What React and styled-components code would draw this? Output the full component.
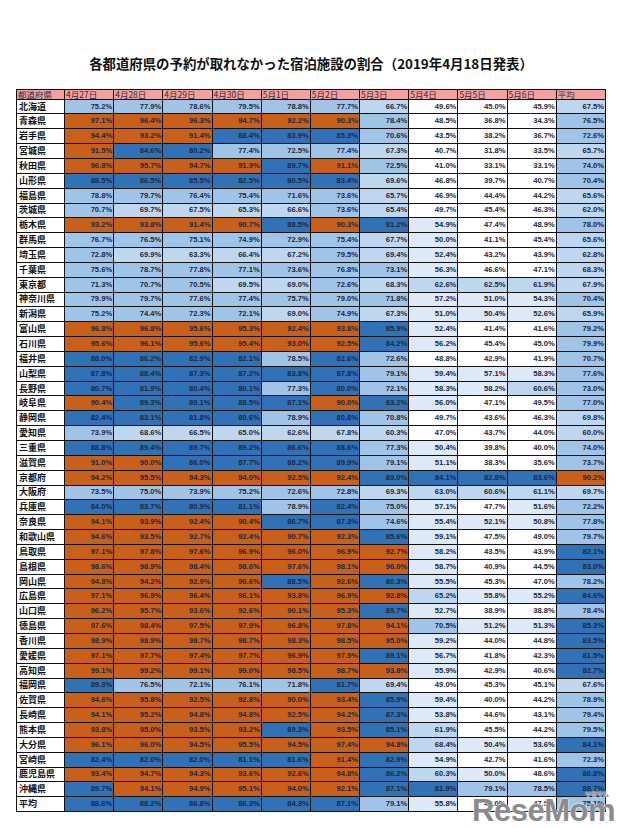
import React from "react";
import styled, { createGlobalStyle } from "styled-components";

const GlobalStyle = createGlobalStyle`
  body {
    margin: 0;
    background: #fff;
    font-family: "Noto Sans CJK JP", "Liberation Sans", sans-serif;
  }
`;

const Page = styled.div`
  width: 620px;
  height: 828px;
  padding: 54px 14px 0 16px;
  box-sizing: border-box;
  overflow: hidden;
`;

const Title = styled.h1`
  margin: 0 0 17px 0;
  font-size: 13.4px;
  line-height: 18px;
  font-weight: 700;
  text-align: center;
  color: #111;
  letter-spacing: 0;
`;

const TableWrap = styled.div`
  position: relative;
  width: 590px;
`;

const Table = styled.table`
  width: 590px;
  border-collapse: collapse;
  table-layout: fixed;
`;

const HeadRow = styled.tr`
  height: 9.6px;
`;

const Row = styled.tr`
  height: 14.85px;
`;

const HeadCell = styled.th`
  border: 1px solid #111;
  background: #f2a0a0;
  color: #3a2a3a;
  font-size: 8.5px;
  font-weight: 400;
  line-height: 8px;
  padding: 0 1px;
  text-align: left;
  white-space: nowrap;
  overflow: hidden;
`;

const NameCell = styled.td`
  border: 1px solid #111;
  background: #fff;
  color: #111;
  font-size: 9px;
  font-weight: 700;
  line-height: 10px;
  padding: 0 2px;
  text-align: left;
  white-space: nowrap;
  overflow: hidden;
`;

const ValueCell = styled.td`
  border: 1px solid #111;
  background: ${(props) => props.$bg};
  color: #1f2740;
  font-family: "Liberation Sans", Arial, sans-serif;
  font-size: 7.6px;
  font-weight: 700;
  line-height: 10px;
  padding: 0 1px 0 0;
  text-align: right;
  white-space: nowrap;
  overflow: hidden;
`;

const Watermark = styled.div`
  position: absolute;
  right: -9px;
  bottom: -14px;
  font-family: "Liberation Sans Narrow", "Liberation Sans", sans-serif;
  font-weight: 700;
  font-size: 31px;
  line-height: 30px;
  color: #8b8b8b;
  text-shadow: 0 0 2px #fff, 0 0 1px #fff;
  letter-spacing: -0.5px;
`;

const WatermarkKana = styled.span`
  position: absolute;
  right: 6px;
  top: -5px;
  font-family: "Noto Sans CJK JP", sans-serif;
  font-size: 6px;
  line-height: 6px;
  font-weight: 700;
  letter-spacing: 0;
  color: #8b8b8b;
`;

const headers = [
  "都道府県",
  "4月27日",
  "4月28日",
  "4月29日",
  "4月30日",
  "5月1日",
  "5月2日",
  "5月3日",
  "5月4日",
  "5月5日",
  "5月6日",
  "平均",
];

const rows = [
  ["北海道", [75.2, 77.9, 78.6, 79.5, 78.8, 77.7, 66.7, 49.6, 45.0, 45.9, 67.5]],
  ["青森県", [97.1, 96.4, 96.3, 94.7, 92.2, 90.3, 78.4, 48.5, 36.8, 34.3, 76.5]],
  ["岩手県", [94.4, 93.2, 91.4, 88.4, 83.9, 85.3, 70.6, 43.5, 38.2, 36.7, 72.6]],
  ["宮城県", [91.5, 84.6, 80.2, 77.4, 72.5, 77.4, 67.3, 40.7, 31.8, 33.5, 65.7]],
  ["秋田県", [96.8, 95.7, 94.7, 91.9, 89.7, 91.1, 72.5, 41.0, 33.1, 33.1, 74.0]],
  ["山形県", [88.5, 86.5, 85.5, 82.5, 80.5, 83.4, 69.6, 46.8, 39.7, 40.7, 70.4]],
  ["福島県", [78.8, 79.7, 76.4, 75.4, 71.6, 73.6, 65.7, 46.9, 44.4, 44.2, 65.6]],
  ["茨城県", [70.7, 69.7, 67.5, 65.3, 66.6, 73.6, 65.4, 49.7, 45.4, 46.3, 62.0]],
  ["栃木県", [93.2, 93.8, 91.4, 90.7, 88.5, 90.3, 81.2, 54.9, 47.4, 48.9, 78.0]],
  ["群馬県", [76.7, 76.5, 75.1, 74.9, 72.9, 75.4, 67.7, 50.0, 41.1, 45.4, 65.6]],
  ["埼玉県", [72.8, 69.9, 63.3, 66.4, 67.2, 79.5, 69.4, 52.4, 43.2, 43.9, 62.8]],
  ["千葉県", [75.6, 78.7, 77.8, 77.1, 73.6, 76.8, 73.1, 56.3, 46.6, 47.1, 68.3]],
  ["東京都", [71.3, 70.7, 70.5, 69.5, 69.0, 72.6, 68.3, 62.6, 62.5, 61.9, 67.9]],
  ["神奈川県", [79.9, 79.7, 77.6, 77.4, 75.7, 79.0, 71.8, 57.2, 51.0, 54.3, 70.4]],
  ["新潟県", [75.2, 74.4, 72.3, 72.1, 69.0, 74.9, 67.3, 51.0, 50.4, 52.6, 65.9]],
  ["富山県", [96.8, 96.8, 95.6, 95.3, 92.4, 93.8, 85.9, 52.4, 41.4, 41.6, 79.2]],
  ["石川県", [95.6, 96.1, 95.6, 95.4, 93.0, 92.5, 84.2, 56.2, 45.4, 45.0, 79.9]],
  ["福井県", [88.0, 86.2, 82.9, 82.1, 78.5, 82.6, 72.6, 48.8, 42.9, 41.9, 70.7]],
  ["山梨県", [87.8, 88.4, 87.3, 87.2, 83.8, 87.8, 79.1, 59.4, 57.1, 58.3, 77.6]],
  ["長野県", [80.7, 81.9, 80.4, 80.1, 77.3, 80.0, 72.1, 58.3, 58.2, 60.6, 73.0]],
  ["岐阜県", [90.4, 89.3, 89.1, 88.5, 87.1, 90.0, 83.2, 56.0, 47.1, 49.5, 77.0]],
  ["静岡県", [82.4, 83.1, 81.8, 80.6, 78.9, 80.8, 70.8, 49.7, 43.6, 46.3, 69.8]],
  ["愛知県", [73.9, 68.6, 66.5, 65.0, 62.6, 67.8, 60.3, 47.0, 43.7, 44.0, 60.0]],
  ["三重県", [88.8, 89.4, 89.7, 89.2, 86.6, 88.6, 77.3, 50.4, 39.8, 40.0, 74.0]],
  ["滋賀県", [91.0, 90.0, 86.0, 87.7, 88.2, 89.9, 79.1, 51.1, 38.3, 35.6, 73.7]],
  ["京都府", [94.2, 95.5, 94.3, 94.0, 92.5, 92.4, 89.0, 84.1, 82.8, 83.6, 90.2]],
  ["大阪府", [73.5, 75.0, 73.9, 75.2, 72.6, 72.8, 69.3, 63.0, 60.6, 61.1, 69.7]],
  ["兵庫県", [84.0, 83.7, 80.9, 81.1, 78.9, 82.4, 75.0, 57.1, 47.7, 51.6, 72.2]],
  ["奈良県", [94.1, 93.9, 92.4, 90.4, 86.7, 87.3, 74.6, 55.4, 52.1, 50.8, 77.8]],
  ["和歌山県", [94.6, 93.5, 92.7, 92.4, 90.7, 92.3, 85.6, 59.1, 47.5, 49.0, 79.7]],
  ["鳥取県", [97.1, 97.8, 97.6, 96.9, 96.0, 96.9, 92.7, 58.2, 43.5, 43.9, 82.1]],
  ["島根県", [98.6, 98.9, 98.4, 98.6, 97.6, 98.1, 96.0, 58.7, 40.9, 44.5, 83.0]],
  ["岡山県", [94.8, 94.2, 92.9, 90.6, 88.5, 92.6, 80.3, 55.5, 45.3, 47.0, 78.2]],
  ["広島県", [97.1, 96.9, 96.4, 96.1, 93.8, 96.9, 92.8, 65.2, 55.8, 55.2, 84.6]],
  ["山口県", [96.2, 95.7, 93.6, 92.6, 90.1, 95.3, 89.7, 52.7, 38.9, 38.8, 78.4]],
  ["徳島県", [97.6, 98.4, 97.5, 97.9, 96.8, 97.8, 94.1, 70.5, 51.2, 51.3, 85.3]],
  ["香川県", [98.9, 98.9, 98.7, 98.7, 98.3, 98.5, 95.0, 59.2, 44.0, 44.8, 83.5]],
  ["愛媛県", [97.1, 97.7, 97.4, 97.7, 96.9, 97.9, 89.1, 56.7, 41.8, 42.3, 81.5]],
  ["高知県", [99.1, 99.2, 99.1, 99.0, 98.5, 98.7, 93.8, 55.9, 42.9, 40.6, 82.7]],
  ["福岡県", [89.3, 76.5, 72.1, 76.1, 71.8, 81.7, 69.4, 49.0, 45.3, 45.1, 67.6]],
  ["佐賀県", [94.6, 95.8, 92.5, 92.8, 90.0, 93.4, 85.9, 59.4, 40.0, 44.2, 78.9]],
  ["長崎県", [94.1, 95.2, 94.8, 94.8, 92.5, 94.2, 87.3, 53.8, 44.6, 43.1, 79.4]],
  ["熊本県", [93.8, 95.0, 93.5, 93.2, 89.3, 93.5, 85.1, 61.9, 45.5, 44.2, 79.5]],
  ["大分県", [96.1, 96.0, 94.5, 95.5, 94.5, 97.4, 94.8, 68.4, 50.4, 53.6, 84.1]],
  ["宮崎県", [82.4, 82.0, 82.0, 81.1, 81.6, 91.4, 82.9, 54.9, 42.7, 41.6, 72.3]],
  ["鹿児島県", [93.4, 94.7, 94.3, 93.6, 92.6, 94.8, 86.2, 60.3, 50.0, 48.6, 80.8]],
  ["沖縄県", [89.7, 94.1, 94.9, 95.1, 94.0, 92.1, 87.1, 81.9, 79.1, 78.5, 88.7]],
  ["平均", [88.6, 88.2, 86.8, 86.3, 84.3, 87.1, 79.1, 55.8, 47.0, 47.5, 75.1]],
];

const cellColor = (v) => {
  if (v >= 90) return "#c8601b";
  if (v >= 80) return "#3172b6";
  if (v >= 70) return "#9fc4e8";
  if (v >= 60) return "#bed7ef";
  if (v >= 50) return "#dde9f6";
  return "#ffffff";
};

const App = () => {
  return (
    <Page>
      <GlobalStyle />
      <Title>各都道府県の予約が取れなかった宿泊施設の割合（2019年4月18日発表）</Title>
      <TableWrap>
        <Table>
          <colgroup>
            <col style={{ width: "48px" }} />
            {headers.slice(1).map((h) => (
              <col key={h} />
            ))}
          </colgroup>
          <thead>
            <HeadRow>
              {headers.map((h) => (
                <HeadCell key={h}>{h}</HeadCell>
              ))}
            </HeadRow>
          </thead>
          <tbody>
            {rows.map(([name, values]) => (
              <Row key={name}>
                <NameCell>{name}</NameCell>
                {values.map((v, i) => (
                  <ValueCell key={i} $bg={cellColor(v)}>
                    {v.toFixed(1)}%
                  </ValueCell>
                ))}
              </Row>
            ))}
          </tbody>
        </Table>
        <Watermark>
          <WatermarkKana>リセマム</WatermarkKana>
          ReseMom
        </Watermark>
      </TableWrap>
    </Page>
  );
};

export default App;
